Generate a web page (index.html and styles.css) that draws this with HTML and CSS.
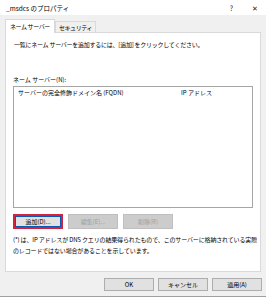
FILE: index.html
```html
<!DOCTYPE html>
<html lang="ja">
<head>
<meta charset="utf-8">
<link rel="stylesheet" href="styles.css">
</head>
<body>
<div class="win">
  <div class="titlebar">
    <span class="title">_msdcs のプロパティ</span>
    <span class="tb-btns"><span class="help">?</span><span class="close">✕</span></span>
  </div>
  <div class="tabs">
    <div class="tab active">ネーム サーバー</div>
    <div class="tab">セキュリティ</div>
  </div>
  <div class="panel">
    <p class="intro">一覧にネーム サーバーを追加するには、[追加] をクリックしてください。</p>
    <p class="label">ネーム サーバー(N):</p>
    <div class="list">
      <div class="list-head">
        <span class="col1">サーバーの完全修飾ドメイン名 (FQDN)</span>
        <span class="col2">IP アドレス</span>
      </div>
    </div>
    <div class="btnrow">
      <button class="btn focus">追加(D)...</button>
      <button class="btn dis">編集(E)...</button>
      <button class="btn dis">削除(R)</button>
    </div>
    <p class="note"><span class="nl">(*) は、IP アドレスが DNS クエリの結果得られたもので、このサーバーに格納されている実際</span><span class="nl">のレコードではない場合があることを示しています。</span></p>
  </div>
  <div class="footer">
    <button class="btn fbtn">OK</button>
    <button class="btn fbtn">キャンセル</button>
    <button class="btn fbtn">適用(A)</button>
  </div>
</div>
</body>
</html>
```
FILE: styles.css
```css
* { box-sizing: border-box; }
html, body { margin: 0; padding: 0; }
body {
  width: 266px; height: 300px; overflow: hidden;
  background: #ffffff;
  font-family: "Noto Sans CJK JP", "Noto Sans", sans-serif;
  font-size: 6px;
  color: #000;
}
.win {
  height: 297px;
  background: #f0f0f0;
  border-bottom: 1px solid #a0a0a0;
  display: flex; flex-direction: column;
}
.titlebar {
  height: 15px; background: #fff; flex: none;
  display: flex; align-items: center; justify-content: space-between;
  padding: 0 8px 0 6px;
}
.title { font-size: 6.5px; }
.tb-btns { display: flex; gap: 19px; font-size: 7px; color: #222; }
.tabs { display: flex; padding: 0 0 0 5px; height: 17px; flex: none; align-items: flex-end; }
.tab {
  height: 11px; padding: 0 3px; display: flex; align-items: center;
  border: 1px solid #d9d9d9; border-bottom: none; background: #f0f0f0;
  letter-spacing: -0.4px;
}
.tab.active { height: 14px; background: #fff; padding: 0 4px; position: relative; top: 1px; }
.panel {
  margin: 0 5px; height: 240px; flex: none;
  background: #fff; border: 1px solid #d9d9d9;
  padding: 0 7px;
  display: flex; flex-direction: column;
}
p { margin: 0; }
.intro { margin-top: 8px; margin-left: 1px; line-height: 8px; letter-spacing: -0.25px; }
.label { margin-top: 27px; line-height: 8px; }
.list {
  margin-top: 2px; height: 122px; width: 240px;
  border: 1px solid #a6a6a6;
}
.list-head { display: flex; height: 11px; align-items: center; padding-left: 4px; }
.col1 { width: 163px; }
.btnrow { display: flex; gap: 5px; margin-top: 6px; }
.btn {
  font-family: inherit; font-size: 6px;
  width: 50px; height: 15px; padding: 0;
  background: #e1e1e1; border: 1px solid #adadad; color: #000;
}
.btn.focus { border: 2px solid #d4213d; box-shadow: inset 0 0 0 1px #0a58b5; }
.btn.dis { background: #cccccc; border-color: #bfbfbf; color: #a0a0a0; }
.note { margin-top: 5px; line-height: 11px; }
.nl { display: block; white-space: nowrap; letter-spacing: -0.15px; }
.footer { display: flex; justify-content: flex-end; gap: 4px; padding: 6px 4px 0 0; flex: none; }
.fbtn { width: 50px; height: 13px; }
```
